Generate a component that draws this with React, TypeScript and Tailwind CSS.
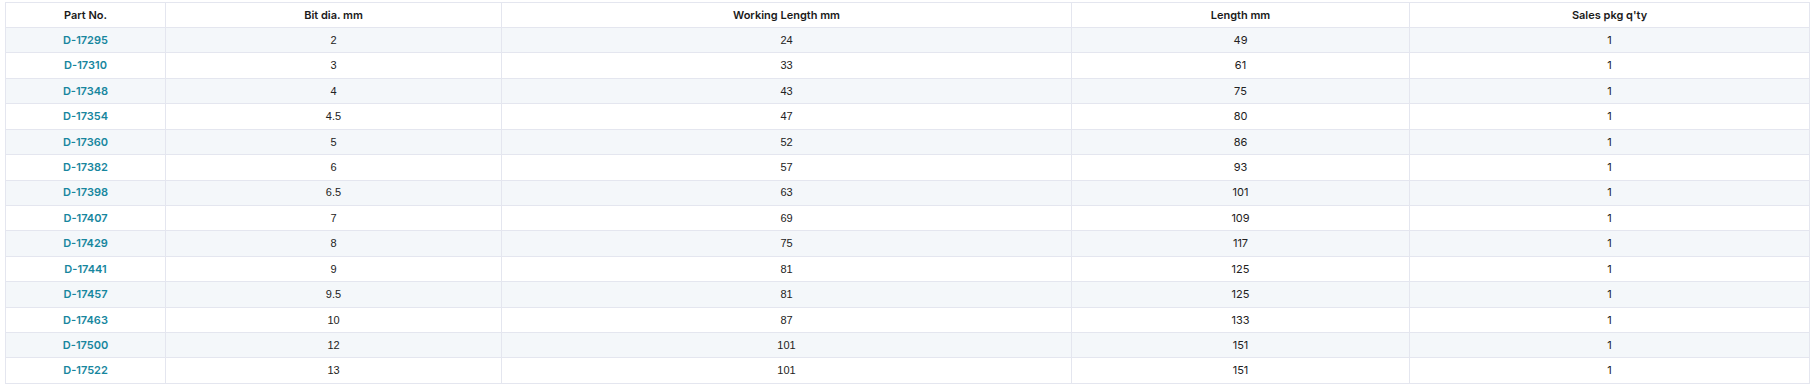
import React from "react";

const rows: [string, string, string, string, string][] = [
  ["D-17295", "2", "24", "49", "1"],
  ["D-17310", "3", "33", "61", "1"],
  ["D-17348", "4", "43", "75", "1"],
  ["D-17354", "4.5", "47", "80", "1"],
  ["D-17360", "5", "52", "86", "1"],
  ["D-17382", "6", "57", "93", "1"],
  ["D-17398", "6.5", "63", "101", "1"],
  ["D-17407", "7", "69", "109", "1"],
  ["D-17429", "8", "75", "117", "1"],
  ["D-17441", "9", "81", "125", "1"],
  ["D-17457", "9.5", "81", "125", "1"],
  ["D-17463", "10", "87", "133", "1"],
  ["D-17500", "12", "101", "151", "1"],
  ["D-17522", "13", "101", "151", "1"],
];

export default function App() {
  return (
    <div className="bg-white w-[1813px] h-[391px] pt-[2px] pl-[5px]">
      <table
        className="border-collapse text-[11px] text-[#222] table-fixed"
        style={{ fontFamily: "Inter, 'Noto Sans', sans-serif" }}
      >
        <colgroup>
          <col className="w-[160px]" />
          <col className="w-[336px]" />
          <col className="w-[570px]" />
          <col className="w-[338px]" />
          <col className="w-[400px]" />
        </colgroup>
        <thead>
          <tr className="h-[25px] bg-white">
            {["Part No.", "Bit dia. mm", "Working Length mm", "Length mm", "Sales pkg q'ty"].map((h) => (
              <th
                key={h}
                className="border border-[#e4e6ef] font-semibold text-center p-0 text-[11px] text-[#1a1a1a]"
              >
                {h}
              </th>
            ))}
          </tr>
        </thead>
        <tbody>
          {rows.map((r, i) => (
            <tr key={r[0]} className={i % 2 === 0 ? "h-[25.43px] bg-[#f4f7fa]" : "h-[25.43px] bg-white"}>
              <td className="border border-[#e4e6ef] text-center p-0 font-semibold text-[#17869e]">{r[0]}</td>
              <td
                className="border border-[#e4e6ef] text-center p-0"
                style={{ fontFamily: "'Liberation Sans', Arial, sans-serif" }}
              >
                {r[1]}
              </td>
              <td
                className="border border-[#e4e6ef] text-center p-0"
                style={{ fontFamily: "'Liberation Sans', Arial, sans-serif" }}
              >
                {r[2]}
              </td>
              <td className="border border-[#e4e6ef] text-center p-0">{r[3]}</td>
              <td className="border border-[#e4e6ef] text-center p-0">{r[4]}</td>
            </tr>
          ))}
        </tbody>
      </table>
    </div>
  );
}
